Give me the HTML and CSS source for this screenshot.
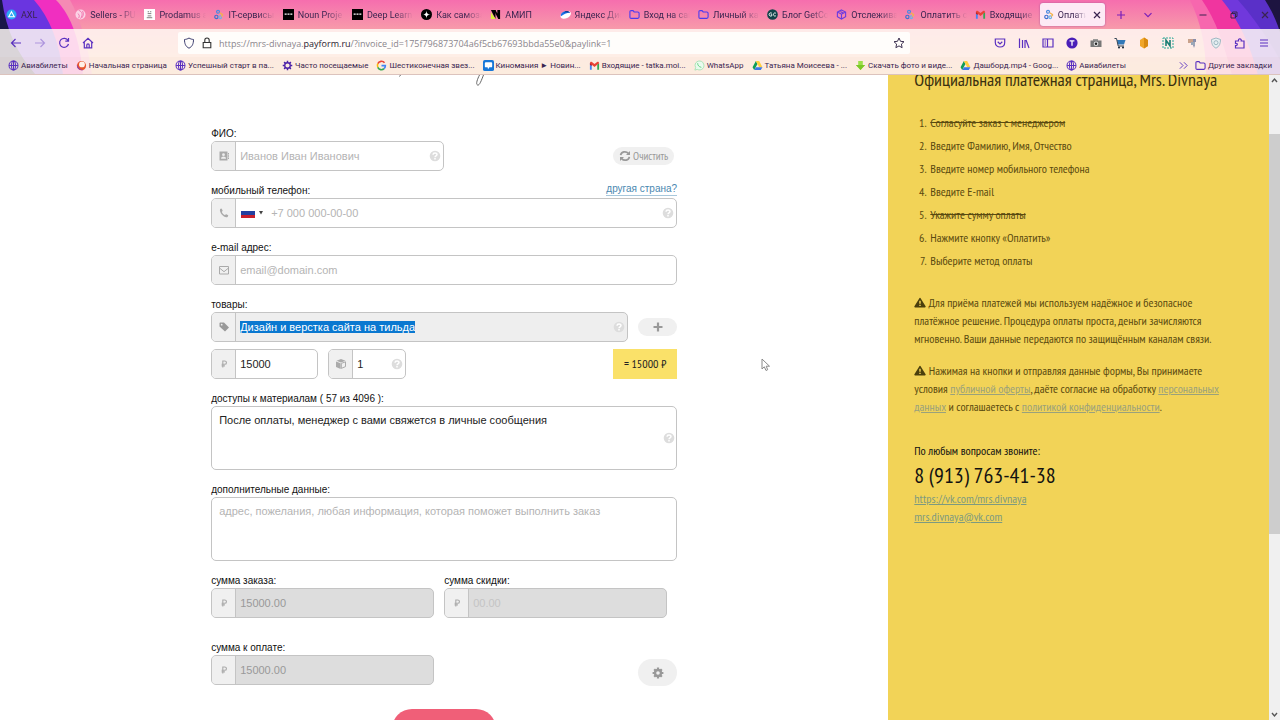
FILE: index.html
```html
<!DOCTYPE html>
<html lang="ru">

<head>
  <meta charset="utf-8">
  <title>Оплатить</title>
  <link rel="stylesheet" href="styles.css">
</head>

<body>
  <!-- icons -->
  <svg class="sprite" aria-hidden="true">
    <symbol id="globe" viewBox="0 0 12 12"><g fill="none" stroke="#5a30c0" stroke-width="1.1"><circle cx="6" cy="6" r="4.9"/><ellipse cx="6" cy="6" rx="2.2" ry="4.9"/><path d="M1.2 6h9.6M6 1v10"/></g></symbol>
    <symbol id="drive" viewBox="0 0 12 12"><path fill="#0f9d58" d="M4.2 1.2L0.6 7.8l1.8 3L6 4.4z"/><path fill="#ffcf3f" d="M4.2 1.2h3.6l3.6 6.6H7.8z"/><path fill="#3b78e7" d="M4.4 7.8h7l-1.8 3H2.4z"/></symbol>
    <symbol id="gmail" viewBox="0 0 12 12"><path fill="#4285f4" d="M1 3.4v7.1h2V5z"/><path fill="#34a853" d="M11 3.4v7.1H9V5z"/><path fill="#ea4335" d="M1 3.6C1 2 2.2 1.4 3.2 2.2L6 4.4l2.8-2.2c1-.8 2.2-.2 2.2 1.4L6 7.6z"/><path fill="#c5221f" d="M1 3.2l2 1.4v2L1 5.2z"/></symbol>
    <symbol id="prodamus" viewBox="0 0 12 12"><g fill="none" stroke-width="1.3"><circle cx="4.4" cy="3" r="1.6" stroke="#4c8be0"/><circle cx="2.6" cy="8.6" r="1.8" stroke="#3f6fd0"/><circle cx="6.8" cy="9" r="1.4" stroke="#6cb2e8"/><path stroke="#f3b24a" d="M6.2 4.2l3.6 2.2M9.8 6.4l-2 1.8"/></g></symbol>
    <symbol id="folder" viewBox="0 0 12 12"><path fill="none" stroke="currentColor" stroke-width="1.2" d="M1 3.2c0-1 .4-1.4 1.4-1.4h2l1.2 1.4h4c1 0 1.4.4 1.4 1.4v4.2c0 1-.4 1.4-1.4 1.4H2.4C1.4 10.200 1 9.800 1 8.800z"/></symbol>
    <symbol id="dots" viewBox="0 0 12 12"><path d="M0 0h12v12H0z"/><path stroke="#fff" stroke-width="1.4" d="M1.800 5.600h2.200M4.900 5.600h2.200M8 5.600h2.200"/></symbol>
    <symbol id="close" viewBox="0 0 12 12"><path stroke="currentColor" stroke-width="1.2" d="M3 3l6 6M9 3l-6 6"/></symbol>
    <symbol id="question" viewBox="0 0 12 12"><circle cx="6" cy="6" r="5.300" fill="#ddd"/><path fill="none" stroke="#fff" stroke-width="1.500" d="M4 4.700C4.100 2.500 8 2.500 8 4.600 8 5.900 6 5.900 6 7.300M6 8.100v1.400"/></symbol>
    <symbol id="ruble" viewBox="0 0 12 12"><path fill="none" stroke="#aaa" stroke-width="1.100" d="M4.800 9.500V3h1.800c2.500 0 2.500 3.300 0 3.300H3.600M3.600 7.900h3.300"/></symbol>
    <symbol id="warn" viewBox="0 0 14 12"><path fill="#4b3f0c" d="M7 .6c.4 0 .7.200.900.600l5.600 9.200c.4.700 0 1.300-.8 1.300H1.300c-.8 0-1.200-.6-.8-1.300L6.100 1.200C6.300.800 6.600.600 7 .600z"/><path stroke="#f2d357" stroke-width="1.700" d="M7 4v3.500M7 8.500v1.600"/></symbol>
  </svg>

  <header class="browser">
    <svg class="theme theme-left" viewBox="0 0 110 75" aria-hidden="true">
      <path fill="#f58ab4" d="M0 0h70C80 18 88 46 92 75H0z"/>
      <path fill="#f02fc0" d="M0 0h56C72 16 80 42 83 75H0z"/>
      <path fill="#6a35e0" d="M0 0h34C50 18 60 44 63 75H0z"/>
      <path fill="#191648" d="M0 0h2C6 30 18 55 36 75H0z"/>
    </svg>
    <svg class="theme theme-right" viewBox="0 0 140 75" aria-hidden="true">
      <path fill="#f767ae" d="M50 0h90v75H66C66 45 60 20 50 0z"/>
      <path fill="#f0359f" d="M62 0h78v75H92C84 45 76 20 62 0z"/>
      <path fill="#7038dc" d="M82 0h58v75h-22C110 45 100 22 82 0z"/>
      <path fill="#5a30c8" d="M98 0h42v60C128 38 114 18 98 0z"/>
      <path fill="#1d1440" d="M125 0h15v32C136 20 131 9 125 0z"/>
    </svg>

    <div class="tabbar">
      <div class="tabs">
        <div class="tab"><svg class="fav" viewBox="0 0 12 12"><circle cx="6" cy="6" r="5.500" fill="#2aa8f5"/><path d="M6 3l3 5.500H3z" fill="none" stroke="#fff" stroke-width="1.200"/></svg><span>AXL</span></div>
        <div class="tab"><svg class="fav" viewBox="0 0 12 12"><circle cx="6" cy="6" r="5.500" fill="#fbd3e6"/><path d="M4 1.500c4 1 5 5 2 9M8 2c2 3 1 6-1 8M3 5c2 1 2 3 1 5" fill="none" stroke="#f06fa8"/></svg><span>Sellers - PU</span></div>
        <div class="tab"><svg class="fav" viewBox="0 0 12 12"><path fill="#fff" d="M0 0h12v12H0z"/><path stroke="#777" d="M3 9.500h6M4 7.500h4M4 3h1.500M6.500 3H8M4 5h4"/></svg><span>Prodamus а</span></div>
        <div class="tab"><svg class="fav"><use href="#prodamus"/></svg><span>IT-сервисы</span></div>
        <div class="tab"><svg class="fav"><use href="#dots"/></svg><span>Noun Proje</span></div>
        <div class="tab"><svg class="fav"><use href="#dots"/></svg><span>Deep Learn</span></div>
        <div class="tab"><svg class="fav" viewBox="0 0 12 12"><circle cx="6" cy="6" r="6"/><path fill="#fff" d="M6 1.500C6.300 4.800 7.200 5.700 10.500 6 7.200 6.300 6.300 7.200 6 10.500 5.700 7.200 4.800 6.300 1.500 6 4.800 5.700 5.700 4.800 6 1.500z"/></svg><span>Как самоза</span></div>
        <div class="tab"><svg class="fav" viewBox="0 0 12 12"><path d="M1 1h5v10z"/><path fill="#d7f23c" d="M1 3.500L6 11H1z"/><path d="M4 1l5 10h2V1H8v4L6 1z"/></svg><span>АМИП</span></div>
        <div class="tab"><svg class="fav" viewBox="0 0 12 12"><ellipse cx="6" cy="6.500" rx="6" ry="3.800" fill="#fff" transform="rotate(-25 6 6)"/><path fill="#1c70e8" d="M1 8C0 3 8 0 11 4 7 4 4 5.500 1 8z"/><path fill="#12276b" d="M4 4c2-2 5-2 7 0-2-.5-5-.5-7 0z"/></svg><span>Яндекс Дис</span></div>
        <div class="tab"><svg class="fav blue"><use href="#folder"/></svg><span>Вход на сай</span></div>
        <div class="tab"><svg class="fav blue"><use href="#folder"/></svg><span>Личный ка</span></div>
        <div class="tab"><svg class="fav" viewBox="0 0 12 12"><circle cx="6" cy="6" r="5.800" fill="#12444a"/><path fill="none" stroke="#fff" d="M5.300 4.600C4 3.600 2.300 4.600 2.300 6s1.700 2.400 3 1.400V6.200H4.200M9.700 4.600C8.500 3.800 7 4.600 7 6s1.500 2.200 2.700 1.400"/></svg><span>Блог GetCo</span></div>
        <div class="tab"><svg class="fav" viewBox="0 0 12 12"><path fill="none" stroke="#6a3be0" stroke-width="1.200" d="M6 1l4.500 2.300v5L6 11 1.500 8.300v-5zM1.500 3.300L6 5.700l4.500-2.400M6 5.700V11M3.800 2.200l4.500 2.400"/></svg><span>Отслежива</span></div>
        <div class="tab"><svg class="fav"><use href="#prodamus"/></svg><span>Оплатить с</span></div>
        <div class="tab"><svg class="fav"><use href="#gmail"/></svg><span>Входящие</span></div>
        <div class="tab active"><svg class="fav"><use href="#prodamus"/></svg><span>Оплатит</span><button class="tab-close" aria-label="Закрыть вкладку"><svg class="ico"><use href="#close"/></svg></button></div>
      </div>
      <div class="tab-tools">
        <button aria-label="Новая вкладка"><svg class="ico" viewBox="0 0 12 12"><path stroke="currentColor" stroke-width="1.200" d="M6 2v8M2 6h8"/></svg></button>
        <button aria-label="Список вкладок"><svg class="ico" viewBox="0 0 12 12"><path fill="none" stroke="currentColor" stroke-width="1.200" d="M2.500 4.200L6 7.700l3.500-3.500"/></svg></button>
      </div>
      <div class="window-tools">
        <button aria-label="Свернуть"><svg class="ico" viewBox="0 0 12 12"><path stroke="currentColor" d="M2.500 6h7"/></svg></button>
        <button aria-label="Развернуть"><svg class="ico" viewBox="0 0 12 12"><path fill="none" stroke="currentColor" d="M3 4.500h4.500V9H3zM4.500 4.300V3H9v4.500H7.700"/></svg></button>
        <button aria-label="Закрыть"><svg class="ico"><use href="#close"/></svg></button>
      </div>
    </div>

    <div class="toolbar">
      <div class="nav">
        <button aria-label="Назад"><svg class="ico" viewBox="0 0 12 12"><path fill="none" stroke="currentColor" stroke-width="1.200" d="M11 6H1.500M5.500 2L1.500 6l4 4"/></svg></button>
        <button class="off" aria-label="Вперёд"><svg class="ico" viewBox="0 0 12 12"><path fill="none" stroke="currentColor" stroke-width="1.200" d="M1 6h9.500M6.500 2l4 4-4 4"/></svg></button>
        <button aria-label="Обновить"><svg class="ico" viewBox="0 0 12 12"><path fill="none" stroke="currentColor" stroke-width="1.200" d="M10 3.500A4.500 4.500 0 1 0 10.500 7M10.500 1v3.200H7.300"/></svg></button>
        <button aria-label="Домой"><svg class="ico" viewBox="0 0 12 12"><path fill="none" stroke="currentColor" stroke-width="1.200" d="M1 6l5-4.700L11 6M2.300 5v5.800h7.400V5M4.800 10.500V8c0-1.400 2.400-1.400 2.400 0v2.500"/></svg></button>
      </div>
      <div class="urlbar">
        <svg class="ico" viewBox="0 0 12 12"><path fill="none" stroke="#3b3c6e" d="M6 1c1.500 1 2.800 1.300 4.500 1.500 0 4-1 7-4.500 8.700C2.500 9.500 1.500 6.500 1.500 2.500 3.200 2.300 4.500 2 6 1z"/></svg>
        <svg class="ico" viewBox="0 0 12 12"><path fill="none" stroke="#333" stroke-width="1.100" d="M2.200 5.500h7.600v5.300H2.200zM3.800 5.500V3.300c0-3 4.400-3 4.400 0v2.200"/></svg>
        <div class="url">https://mrs-divnaya.<b>payform.ru</b>/?invoice_id=175f796873704a6f5cb67693bbda55e0&amp;paylink=1</div>
        <svg class="ico" viewBox="0 0 12 12"><path fill="none" stroke="#3b3050" d="M6 1l1.500 3.300 3.500.400-2.600 2.400.7 3.600L6 8.900l-3.100 1.800.7-3.600L1 4.700l3.500-.400z"/></svg>
      </div>
      <div class="extensions">
        <button aria-label="Pocket"><svg class="ico" viewBox="0 0 12 12"><path fill="none" stroke="currentColor" stroke-width="1.200" d="M1.300 2h9.400v3.500c0 6-9.400 6-9.400 0zM3.700 4.700L6 6.900l2.300-2.200"/></svg></button>
        <button aria-label="Библиотека"><svg class="ico" viewBox="0 0 12 12"><path stroke="currentColor" stroke-width="1.200" d="M1.500 1.500V11M4.500 3v8M7 3v8M8 3l3 8"/></svg></button>
        <button aria-label="Боковая панель"><svg class="ico" viewBox="0 0 12 12"><path fill="none" stroke="currentColor" stroke-width="1.200" d="M1 2h10v8H1zM5.500 2v8M2.500 4H4M2.500 6H4M2.500 8H4"/></svg></button>
        <button aria-label="Аккаунт"><svg class="ico" viewBox="0 0 12 12"><circle cx="6" cy="6" r="5.600" fill="#4a1fb8"/><path stroke="#fff" stroke-width="1.300" d="M3.600 3.800h4.800M6 3.800v5"/></svg></button>
        <button aria-label="Снимок экрана"><svg class="ico" viewBox="0 0 12 12"><path fill="#999" d="M3 2h5v2H3z"/><path fill="#777" d="M.5 3.500h11v6.500H.5z"/><circle cx="6" cy="6.700" r="2.300" fill="#ddd"/><circle cx="6" cy="6.700" r="1.200" fill="#222"/></svg></button>
        <button aria-label="Корзина"><svg class="ico" viewBox="0 0 12 12"><path fill="#3178b8" d="M3 3h8.500L10 7.500H4z"/><path fill="none" stroke="#345" d="M.5 1.500h2L4.200 9H10"/><circle cx="5" cy="10.500" r="1" fill="#123"/><circle cx="9" cy="10.500" r="1" fill="#123"/></svg></button>
        <button aria-label="Сотка"><svg class="ico" viewBox="0 0 12 12"><path fill="#f0a62a" d="M6 .5l4 2.400v6.200l-4 2.400-4-2.400V2.900z"/><path fill="#d88a12" d="M6 .5l4 2.400v6.200l-4 2.400z"/></svg></button>
        <button aria-label="Заметки"><svg class="ico" viewBox="0 0 12 12"><path fill="none" stroke="#2aa897" stroke-dasharray="2 1" d="M1 1h10v10H1z"/><path fill="none" stroke="#1b7f74" stroke-width="1.600" d="M4 9V3.200l4 5.600V3"/></svg></button>
        <button aria-label="Кисть"><svg class="ico" viewBox="0 0 12 12"><path fill="#c9a28c" d="M2 2h5v4H2z"/><path fill="#9aa7b8" d="M5 5h4v3H5z"/><path fill="#8a8fac" d="M7 2h3v3H7zM7 8h2l-1 3z"/></svg></button>
        <button aria-label="Защита"><svg class="ico" viewBox="0 0 12 12"><path fill="#e6eff2" stroke="#9fb8c2" d="M6 1l4.500 1.500c0 4-1 7-4.500 8.700C2.500 9.500 1.500 6.500 1.500 2.500z"/><circle cx="6" cy="5.700" r="2" fill="none" stroke="#9fb8c2"/></svg></button>
        <button aria-label="Расширения"><svg class="ico" viewBox="0 0 12 12"><path fill="none" stroke="currentColor" stroke-width="1.200" d="M1.500 11V8.500c2.400.4 2.400-2.600 0-2.200V4h3C3.800 1 7.800 1 7.200 4H10v7z"/></svg></button>
        <button aria-label="Меню"><svg class="ico" viewBox="0 0 12 12"><path stroke="currentColor" stroke-width="1.100" d="M2 3h8M2 6h8M2 9h8"/></svg></button>
      </div>
    </div>

    <nav class="bookmarks">
      <div class="bookmark-list">
        <a href="#"><svg class="mark"><use href="#globe"/></svg>Авиабилеты</a>
        <a href="#"><svg class="mark" viewBox="0 0 12 12"><circle cx="6" cy="6.200" r="5" fill="#e8542c"/><path fill="#7a3bd0" d="M1 5C2 9 5 11.200 8 10.800 4 12 .5 9 1 5z"/><circle cx="6.500" cy="4.800" r="3.200" fill="#fff0e6"/></svg>Начальная страница</a>
        <a href="#"><svg class="mark"><use href="#globe"/></svg>Успешный старт в па...</a>
        <a href="#"><svg class="mark" viewBox="0 0 12 12"><g fill="none" stroke="#4a1fa8"><circle cx="6" cy="6" r="3" stroke-width="1.400"/><path stroke-width="1.600" d="M6 .8V3M6 9v2.200M.8 6H3M9 6h2.200M2.300 2.300l1.500 1.500M8.200 8.200l1.500 1.500M9.700 2.300L8.200 3.800M3.800 8.200L2.300 9.700"/></g></svg>Часто посещаемые</a>
        <a href="#"><svg class="mark" viewBox="0 0 12 12"><g fill="none" stroke-width="1.800"><path stroke="#ea4335" d="M2 4a4.300 4.300 0 0 1 7.300-1"/><path stroke="#fbbc05" d="M2 4a4.500 4.500 0 0 0 0 4"/><path stroke="#34a853" d="M2 8a4.300 4.300 0 0 0 6.800 1.500"/><path stroke="#4285f4" d="M8.800 9.500C9.900 8.500 10.300 7.500 10.200 6.200H6"/></g></svg>Шестиконечная звез...</a>
        <a href="#"><svg class="mark" viewBox="0 0 12 12"><rect width="12" height="12" rx="2" fill="#1877d8"/><path fill="#fff" d="M3 2.500h6c.6 0 1 .4 1 1v3.500c0 .6-.4 1-1 1H7L5.500 10 5 8H3c-.6 0-1-.4-1-1V3.500c0-.6.4-1 1-1z"/></svg>Киномания ► Новин...</a>
        <a href="#"><svg class="mark"><use href="#gmail"/></svg>Входящие - tatka.moi...</a>
        <a href="#"><svg class="mark" viewBox="0 0 12 12"><path fill="#e9fbee" stroke="#a5e3b5" d="M1 11l.8-2.800C-1 2.500 6-1 9.500 2.500 13.500 8 8 12.500 3.500 10.200z"/><path fill="none" stroke="#5fd07c" d="M4 3.500c0 2.500 1.500 4 4 4.500"/></svg>WhatsApp</a>
        <a href="#"><svg class="mark"><use href="#drive"/></svg>Татьяна Моисеева - ...</a>
        <a href="#"><svg class="mark" viewBox="0 0 12 12"><path fill="#9be04a" d="M3.500 1h5v4.500H11L6 11 1 5.500h2.500z"/><path fill="#7cc828" d="M1 5.500h10L6 11z"/></svg>Скачать фото и виде...</a>
        <a href="#"><svg class="mark"><use href="#drive"/></svg>Дашборд.mp4 - Goog...</a>
        <a href="#"><svg class="mark"><use href="#globe"/></svg>Авиабилеты</a>
      </div>
      <div class="bookmark-more">
        <button aria-label="Ещё закладки"><svg class="mark" viewBox="0 0 12 12"><path fill="none" stroke="currentColor" d="M2 2.500L5.500 6 2 9.500M6.500 2.500L10 6 6.500 9.500"/></svg></button>
        <a href="#"><svg class="mark"><use href="#folder"/></svg>Другие закладки</a>
      </div>
    </nav>
  </header>

  <div class="page">
    <main>
      <svg class="script-title" viewBox="0 0 466 12" aria-hidden="true"><path fill="none" stroke="#666" d="M268.500 0c-2 4-4 9-2 10s4-5 6-10M189.500 0l-1 1.500"/></svg>

      <form>
        <div class="row name-row">
          <div class="field half">
            <label for="fio">ФИО:</label>
            <div class="box">
              <span class="addon"><svg class="ico" viewBox="0 0 12 12"><path fill="#aaa" d="M1.500 1.500h8v9h-8zM10 3h1v1.500h-1zM10 5.300h1v1.500h-1zM10 7.500h1V9h-1z"/><circle cx="5.500" cy="4.700" r="1.400" fill="#eee"/><path fill="#eee" d="M3 8.800c0-3 5-3 5 0z"/></svg></span>
              <input type="text" id="fio" placeholder="Иванов Иван Иванович">
              <svg class="ico hint"><use href="#question"/></svg>
            </div>
          </div>
          <button type="reset" class="pill clear"><svg class="ico" viewBox="0 0 12 12"><path fill="none" stroke="#999" stroke-width="1.700" d="M1.600 5.200C2.300 1.500 7 .7 9.300 3.400M10.400 6.800c-.7 3.700-5.400 4.500-7.700 1.800"/><path fill="#999" d="M11 1v4H7zM1 11V7h4z"/></svg>Очистить</button>
        </div>

        <div class="field">
          <div class="label-row">
            <label for="phone">мобильный телефон:</label>
            <a href="#" class="country">другая страна?</a>
          </div>
          <div class="box">
            <span class="addon"><svg class="ico" viewBox="0 0 12 12"><path fill="#aaa" d="M2 2.300C2.800 1.300 3.700 1.400 4 2.200l.6 1.400c.2.700-.8 1-.7 1.500.5 1.300 1.500 2.300 2.800 2.900.6.200.9-.9 1.600-.7l1.400.7c.8.400.7 1.200-.2 1.900C7 11.800 1 6 2 2.300z"/></svg></span>
            <button type="button" class="flag" aria-label="Россия"><svg class="flag-ru" viewBox="0 0 14 9"><path fill="#fff" d="M0 0h14v3H0z"/><path fill="#2340a0" d="M0 2h14v4H0z"/><path fill="#c8202c" d="M0 6h14v3H0z"/></svg><svg class="caret" viewBox="0 0 6 4"><path fill="#444" d="M1 0h4L3 3.500z"/></svg></button>
            <input type="tel" id="phone" placeholder="+7 000 000-00-00">
            <svg class="ico hint"><use href="#question"/></svg>
          </div>
        </div>

        <div class="field">
          <label for="email">e-mail адрес:</label>
          <div class="box">
            <span class="addon"><svg class="ico" viewBox="0 0 12 12"><path fill="none" stroke="#aaa" d="M1.500 2.500h9v7.500h-9zM1.500 4L6 7.700 10.500 4"/></svg></span>
            <input type="email" id="email" placeholder="email@domain.com">
          </div>
        </div>

        <div class="field goods">
          <label for="product">товары:</label>
          <div class="row">
            <div class="box readonly">
              <span class="addon"><svg class="ico" viewBox="0 0 12 12"><path fill="#999" d="M1.500 2.500c0-.6.400-1 1-1H6l5 5L7 10.500l-5.500-5z"/><circle cx="3.700" cy="3.700" r=".9" fill="#eee"/></svg></span>
              <input type="text" id="product" value="Дизайн и верстка сайта на тильда" readonly>
              <svg class="ico hint"><use href="#question"/></svg>
            </div>
            <button type="button" class="pill add" aria-label="Добавить товар"><svg class="ico" viewBox="0 0 12 12"><path stroke="#999" stroke-width="2.200" d="M6 1.500v9M1.500 6h9"/></svg></button>
          </div>
        </div>

        <div class="row price-row">
          <div class="box price">
            <span class="addon"><svg class="ico"><use href="#ruble"/></svg></span>
            <input type="text" id="price" value="15000" aria-label="Цена">
          </div>
          <div class="box count">
            <span class="addon"><svg class="ico" viewBox="0 0 12 12"><path fill="#aaa" d="M6 1l4.500 1.700L6 4.500 1.500 2.700z"/><path fill="#aaa" d="M1 3.500l4.600 1.800V11L1 9z"/><path fill="none" stroke="#aaa" d="M10.500 3.800L6.300 5.400v5L10.500 8.600z"/></svg></span>
            <input type="text" id="count" value="1" aria-label="Количество">
            <svg class="ico hint"><use href="#question"/></svg>
          </div>
          <output class="total" for="price count">= 15000 ₽</output>
        </div>

        <div class="field">
          <label for="access">доступы к материалам ( 57 из 4096 ):</label>
          <div class="area">
            <textarea id="access">После оплаты, менеджер с вами свяжется в личные сообщения</textarea>
            <svg class="ico hint"><use href="#question"/></svg>
          </div>
        </div>

        <div class="field">
          <label for="extra">дополнительные данные:</label>
          <div class="area">
            <textarea id="extra" placeholder="адрес, пожелания, любая информация, которая поможет выполнить заказ"></textarea>
          </div>
        </div>

        <div class="row sums">
          <div class="field sum">
            <label for="order">сумма заказа:</label>
            <div class="box disabled">
              <span class="addon"><svg class="ico"><use href="#ruble"/></svg></span>
              <input type="text" id="order" value="15000.00" disabled>
            </div>
          </div>
          <div class="field sum">
            <label for="discount">сумма скидки:</label>
            <div class="box disabled">
              <span class="addon"><svg class="ico"><use href="#ruble"/></svg></span>
              <input type="text" id="discount" placeholder="00.00" disabled>
            </div>
          </div>
        </div>

        <div class="row pay-row">
          <div class="field sum">
            <label for="pay">сумма к оплате:</label>
            <div class="box disabled">
              <span class="addon"><svg class="ico"><use href="#ruble"/></svg></span>
              <input type="text" id="pay" value="15000.00" disabled>
            </div>
          </div>
          <button type="button" class="pill settings" aria-label="Настройки"><svg class="ico" viewBox="0 0 12 12"><circle cx="6" cy="6" r="3" fill="none" stroke="#999" stroke-width="2.400"/><path stroke="#999" stroke-width="2.200" d="M6 .6v2M6 9.400v2M.6 6h2M9.400 6h2M2.200 2.200l1.400 1.400M8.400 8.400l1.400 1.400M9.800 2.200L8.400 3.600M3.600 8.400L2.200 9.800"/></svg></button>
        </div>

        <button type="submit" class="submit" aria-label="Оплатить"></button>
      </form>
    </main>

    <aside>
      <h1>Официальная платежная страница, Mrs. Divnaya</h1>
      <ol>
        <li><s>Согласуйте заказ с менеджером</s></li>
        <li>Введите Фамилию, Имя, Отчество</li>
        <li>Введите номер мобильного телефона</li>
        <li>Введите E-mail</li>
        <li><s>Укажите сумму оплаты</s></li>
        <li>Нажмите кнопку «Оплатить»</li>
        <li>Выберите метод оплаты</li>
      </ol>
      <p><svg class="warn"><use href="#warn"/></svg> Для приёма платежей мы используем надёжное и безопасное платёжное решение. Процедура оплаты проста, деньги зачисляются мгновенно. Ваши данные передаются по защищённым каналам связи.</p>
      <p><svg class="warn"><use href="#warn"/></svg> Нажимая на кнопки и отправляя данные формы, Вы принимаете условия <a href="#">публичной оферты</a>, даёте согласие на обработку <a href="#">персональных данных</a> и соглашаетесь с <a href="#">политикой конфиденциальности</a>.</p>
      <div class="contacts">
        <div>По любым вопросам звоните:</div>
        <div class="phone">8 (913) 763-41-38</div>
        <a href="#">https://vk.com/mrs.divnaya</a>
        <a href="#">mrs.divnaya@vk.com</a>
      </div>
    </aside>

    <div class="scrollbar" aria-hidden="true">
      <svg class="arrow" viewBox="0 0 11 10"><path fill="none" stroke="#555" stroke-width="1.400" d="M3 7l2.500-3L8 7"/></svg>
      <div class="thumb"></div>
      <svg class="arrow" viewBox="0 0 11 10"><path fill="none" stroke="#555" stroke-width="1.400" d="M3 3l2.500 3L8 3"/></svg>
    </div>
  </div>

  <svg class="cursor" viewBox="0 0 10 14" aria-hidden="true"><path fill="#fff" stroke="#888" d="M1 1v10l2.300-2.200L5 12.500l1.700-.800L5.200 8.200h3.300z"/></svg>

  <script>
    // product name is selected on load
    var product = document.getElementById("product");
    product.focus();
    product.select();
  </script>
</body>

</html>
```
FILE: styles.css
```css
* {
  box-sizing: border-box;
}

body {
  margin: 0;
  height: 100vh;
  display: flex;
  flex-direction: column;
  overflow: hidden;
  font-family: "Liberation Sans", Arial, sans-serif;
  font-size: 11px;
  color: #222;
  background: #fff;
}

button {
  display: flex;
  align-items: center;
  justify-content: center;
  padding: 0;
  border: 0;
  background: none;
  color: inherit;
  font: inherit;
  cursor: pointer;
}

.sprite {
  position: absolute;
  width: 0;
  height: 0;
}

.ico {
  width: 12px;
  height: 12px;
  flex: none;
}

/* browser window */
.browser {
  position: relative;
  flex: none;
  overflow: hidden;
  font-family: "Segoe UI", Roboto, sans-serif;
  font-size: 9px;
  color: #3a2450;
  background: linear-gradient(#f66eae, #f79aaa 29px, #f8b98c);
  border-bottom: 1px solid #dcc3bd;
}

.theme {
  position: absolute;
  top: 0;
  height: 75px;
}

.theme-left {
  left: 0;
  width: 110px;
}

.theme-right {
  right: 0;
  width: 140px;
}

.tabbar,
.toolbar,
.bookmarks {
  position: relative;
  display: flex;
  align-items: center;
}

.tabbar {
  height: 29px;
}

.tabs {
  display: flex;
  flex: 1;
  min-width: 0;
}

.tab {
  flex: 1;
  min-width: 0;
  height: 23px;
  margin: 0 2px;
  padding-left: 4px;
  display: flex;
  align-items: center;
  gap: 4px;
  white-space: nowrap;
}

.tab span {
  flex: 1;
  min-width: 0;
  -webkit-mask-image: linear-gradient(to right, #000 60%, transparent);
  mask-image: linear-gradient(to right, #000 60%, transparent);
}

.tab.active {
  background: #fdeaf5;
  border-radius: 3px;
  box-shadow: 0 0 2px #a2509a;
}

.tab.active {
  gap: 3px;
}

.tab-close {
  width: 16px;
}

.fav {
  width: 11px;
  height: 11px;
  flex: none;
}

.blue {
  color: #4a3bf0;
}

.tab-tools {
  display: flex;
  color: #7a20b8;
}

.tab-tools button {
  width: 27px;
}

.window-tools {
  display: flex;
  margin-left: 26px;
}

.window-tools button {
  width: 31px;
}

.toolbar {
  height: 28px;
  padding: 0 4px;
  gap: 78px;
  background: rgba(255, 250, 245, .84);
  color: #5a30c0;
}

.nav,
.extensions {
  display: flex;
}

.nav button,
.extensions button {
  width: 24px;
}

.off {
  opacity: .4;
}

.urlbar {
  flex: 1;
  min-width: 0;
  height: 22px;
  padding: 0 5px;
  display: flex;
  align-items: center;
  gap: 6px;
  background: #fffdfb;
  border-radius: 2px;
}

.url {
  flex: 1;
  overflow: hidden;
  white-space: nowrap;
  font-family: "Segoe UI", "Open Sans", sans-serif;
  color: #8a858c;
}

.url b {
  font-weight: 500;
  color: #2a2030;
}

.bookmarks {
  height: 17px;
  padding: 0 8px;
  background: rgba(253, 246, 238, .84);
  font-size: 8px;
}

.bookmarks a {
  display: flex;
  align-items: center;
  gap: 2px;
  color: inherit;
  text-decoration: none;
  white-space: nowrap;
}

.bookmark-list {
  flex: 1;
  display: flex;
  justify-content: space-between;
}

.bookmark-more {
  display: flex;
  gap: 6px;
  margin-left: 52px;
}

.bookmark-more .mark {
  color: #5a30c0;
}

.mark {
  width: 11px;
  height: 11px;
  flex: none;
}

/* payment page */
.page {
  flex: 1;
  min-height: 0;
  display: grid;
  grid-template-columns: minmax(0, 7fr) minmax(0, 3fr) 11px;
  grid-template-rows: 100%;
}

main {
  overflow: hidden;
}

main form,
.script-title {
  display: block;
  width: 466px;
  margin: 0 auto;
}

.script-title {
  height: 12px;
  margin-bottom: 39px;
}

.row {
  display: flex;
}

.field {
  margin-bottom: 12px;
}

label {
  display: block;
  font-size: 10px;
  line-height: 15px;
  color: #111;
}

.box {
  position: relative;
  display: flex;
  height: 30px;
  border: 1px solid #c4c4c4;
  border-radius: 5px;
  overflow: hidden;
  background: #fff;
}

.addon {
  flex: none;
  width: 24px;
  display: flex;
  align-items: center;
  justify-content: center;
  background: #f0f0f0;
  border-right: 1px solid #c4c4c4;
}

input,
textarea {
  border: 0;
  outline: 0;
  background: none;
  color: #222;
  font: inherit;
}

input {
  flex: 1;
  min-width: 0;
  padding: 0 4px;
}

::placeholder {
  color: #b4b4b4;
}

::selection {
  background: #0a78d0;
  color: #fff;
}

.hint {
  position: absolute;
  top: 50%;
  right: 2px;
  margin-top: -6px;
}

.half {
  width: 233px;
}

.name-row,
.pay-row {
  justify-content: space-between;
}

.pill {
  background: #f0f0f0;
  border-radius: 20px;
}

.clear {
  width: 61px;
  height: 18px;
  gap: 2px;
  margin: 21px 3px 0 0;
  color: #999;
  font-family: "PT Sans Narrow", "Liberation Sans Narrow", sans-serif;
}

.label-row {
  display: flex;
  justify-content: space-between;
}

.country {
  font-size: 10px;
  line-height: 12px;
  height: 13px;
  color: #4a88b0;
  border-bottom: 1px solid #a8c8dc;
  text-decoration: none;
}

.flag {
  width: 31px;
  padding-left: 2px;
  gap: 3px;
}

.flag-ru {
  width: 14px;
  height: 9px;
}

.caret {
  width: 6px;
  height: 4px;
}

.goods {
  margin-bottom: 7px;
}

.goods .row {
  align-items: center;
  gap: 10px;
}

.readonly {
  flex: 1;
  background: #eee;
}

.add {
  width: 39px;
  height: 18px;
}

.price-row {
  gap: 10px;
  margin-bottom: 12px;
}

.price {
  width: 107px;
}

.count {
  width: 78px;
}

.total {
  margin-left: auto;
  width: 64px;
  text-align: center;
  line-height: 30px;
  font-family: "PT Sans Narrow", "Liberation Sans Narrow", sans-serif;
  font-size: 12px;
  background: #fae169;
}

.area {
  position: relative;
  height: 64px;
}

textarea {
  display: block;
  width: 100%;
  height: 100%;
  padding: 7px;
  border: 1px solid #c4c4c4;
  border-radius: 5px;
  resize: none;
}

.sums {
  gap: 10px;
  margin-bottom: 10px;
}

.sum {
  width: 223px;
}

.disabled {
  background: #ddd;
}

.disabled input {
  color: #999;
}

.disabled ::placeholder {
  color: #c4c4c4;
}

.settings {
  width: 39px;
  height: 27px;
  margin-top: 19px;
}

.submit {
  width: 104px;
  height: 40px;
  margin: 12px auto 0;
  background: #f05f78;
  border-radius: 20px;
}

aside {
  padding: 0 40px 0 26px;
  overflow: hidden;
  background: #f2d357;
  font-family: "PT Sans Narrow", "Liberation Sans Narrow", sans-serif;
  font-size: 12px;
  line-height: 18px;
  color: #5a4a10;
}

h1 {
  margin: -5px 0 24px;
  font-size: 18px;
  line-height: 20px;
  font-weight: normal;
  white-space: nowrap;
  color: #3a3010;
}

ol {
  margin: 0 0 24px;
  padding-left: 14px;
}

li {
  line-height: 18px;
  margin-bottom: 5px;
  padding-left: 2px;
}

p {
  margin: 0 0 14px;
}

aside a {
  color: #9aa17c;
}

.warn {
  width: 12px;
  height: 11px;
  vertical-align: -1px;
}

.contacts {
  margin-top: 26px;
  display: flex;
  flex-direction: column;
  align-items: flex-start;
  color: #111;
}

.contacts a {
  color: #7d9a80;
}

.phone {
  font-size: 22px;
  line-height: 30px;
}

.scrollbar {
  display: flex;
  flex-direction: column;
  background: #f0f0f0;
}

.arrow {
  width: 11px;
  height: 10px;
}

.thumb {
  height: 62%;
  margin: 49px 0 auto;
  background: #cdcdcd;
}

.cursor {
  position: absolute;
  left: 761px;
  top: 358px;
  width: 10px;
  height: 14px;
}
```
